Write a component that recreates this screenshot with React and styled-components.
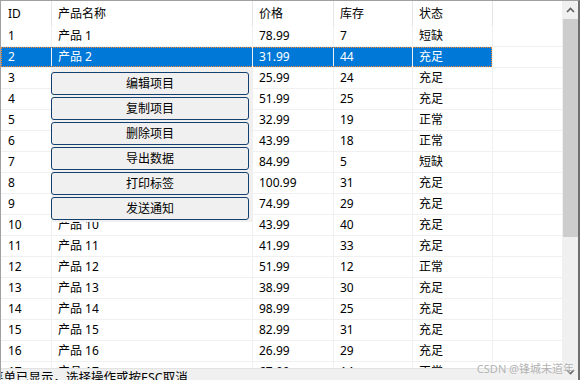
import React from 'react'
import styled, { createGlobalStyle, css } from 'styled-components'

const GlobalStyle = createGlobalStyle`
  html, body {
    margin: 0;
    padding: 0;
    background: #fff;
    overflow: hidden;
  }
  body {
    font-family: "Noto Sans", "Noto Sans CJK SC", sans-serif;
    font-size: 12px;
    color: #000;
  }
`

const cols = '51px 201px 81px 79px 80px 1fr'

const Window = styled.div`
  position: relative;
  width: 580px;
  height: 380px;
  box-sizing: border-box;
  border-top: 1px solid #a0a0a0;
  border-left: 1px solid #a0a0a0;
  border-right: 2px solid #6f6f6f;
  display: flex;
  overflow: hidden;
`

const Main = styled.div`
  flex: 1;
  display: flex;
  flex-direction: column;
  min-width: 0;
`

const ListArea = styled.div`
  position: relative;
  height: 367px;
  overflow: hidden;
  background: #fff;
`

const HeaderRow = styled.div`
  display: grid;
  grid-template-columns: ${cols};
  height: 25px;
`

const HeaderCell = styled.div`
  padding-left: ${p => (p.$first ? 7 : 6)}px;
  line-height: 25px;
  border-right: ${p => (p.$last ? 'none' : '1px solid #e5e5e5')};
  white-space: nowrap;
`

const Row = styled.div`
  position: relative;
  display: grid;
  grid-template-columns: ${cols};
  height: 21px;
  ${p => p.$selected && css`
    &::after {
      content: '';
      position: absolute;
      left: 0;
      top: 0;
      width: 491px;
      height: 20px;
      box-sizing: border-box;
      border: 1px dotted #ff8728;
      pointer-events: none;
    }
  `}
`

const Cell = styled.div`
  padding-left: ${p => (p.$first ? 7 : 6)}px;
  line-height: 20px;
  border-bottom: 1px solid #f0f0f0;
  border-right: ${p => (p.$last ? 'none' : '1px solid #f0f0f0')};
  background: ${p => (p.$selected ? '#0078d7' : '#fff')};
  color: ${p => (p.$selected ? '#fff' : '#000')};
  white-space: nowrap;
  overflow: hidden;
`

const Menu = styled.div`
  position: absolute;
  left: 50px;
  top: 67px;
  width: 200px;
  padding: 4px 2px 2px 0;
  background: #f0f0f0;
  display: flex;
  flex-direction: column;
  gap: 2px;
`

const MenuButton = styled.button`
  width: 198px;
  height: 23px;
  margin: 0;
  padding: 0;
  box-sizing: border-box;
  border: 1px solid #13406e;
  border-radius: 3px;
  background: #f0f0f0;
  font-family: inherit;
  font-size: 12px;
  color: #000;
  line-height: 21px;
  text-align: center;
`

const StatusBar = styled.div`
  flex: 1;
  background: #f0f0f0;
  border-top: 1px solid #e2e2e2;
  overflow: hidden;
`

const StatusText = styled.div`
  margin-left: -10px;
  padding-top: 1px;
  font-size: 12.5px;
  line-height: 16px;
  white-space: nowrap;
`

const Scrollbar = styled.div`
  width: 16px;
  background: #f0f0f0;
  display: flex;
  flex-direction: column;
`

const ArrowButton = styled.div`
  height: 17px;
  display: flex;
  align-items: center;
  justify-content: center;
`

const Thumb = styled.div`
  height: 218px;
  margin: 1px 0 0 1px;
  background: #cdcdcd;
`

const Track = styled.div`
  flex: 1;
`

const Watermark = styled.div`
  position: absolute;
  right: 4px;
  bottom: 5px;
  font-size: 11px;
  line-height: 13px;
  color: rgba(150, 150, 150, 0.75);
  text-shadow: 0 0 1px #fff;
  white-space: nowrap;
  pointer-events: none;
`

const Chevron = ({ down }) => (
  <svg width="9" height="6" viewBox="0 0 9 6">
    <path
      d={down ? 'M1 1 L4.5 4.5 L8 1' : 'M1 5 L4.5 1.5 L8 5'}
      fill="none"
      stroke="#606060"
      strokeWidth="1.6"
    />
  </svg>
)

const headers = ['ID', '产品名称', '价格', '库存', '状态', '']

const rows = [
  ['1', '产品 1', '78.99', '7', '短缺'],
  ['2', '产品 2', '31.99', '44', '充足'],
  ['3', '产品 3', '25.99', '24', '充足'],
  ['4', '产品 4', '51.99', '25', '充足'],
  ['5', '产品 5', '32.99', '19', '正常'],
  ['6', '产品 6', '43.99', '18', '正常'],
  ['7', '产品 7', '84.99', '5', '短缺'],
  ['8', '产品 8', '100.99', '31', '充足'],
  ['9', '产品 9', '74.99', '29', '充足'],
  ['10', '产品 10', '43.99', '40', '充足'],
  ['11', '产品 11', '41.99', '33', '充足'],
  ['12', '产品 12', '51.99', '12', '正常'],
  ['13', '产品 13', '38.99', '30', '充足'],
  ['14', '产品 14', '98.99', '25', '充足'],
  ['15', '产品 15', '82.99', '31', '充足'],
  ['16', '产品 16', '26.99', '29', '充足'],
  ['17', '产品 17', '67.99', '14', '正常'],
]

const menuItems = ['编辑项目', '复制项目', '删除项目', '导出数据', '打印标签', '发送通知']

const App = () => {
  return (
    <>
      <GlobalStyle />
      <Window>
        <Main>
          <ListArea>
            <HeaderRow>
              {headers.map((h, i) => (
                <HeaderCell key={i} $first={i === 0} $last={i === headers.length - 1}>{h}</HeaderCell>
              ))}
            </HeaderRow>
            {rows.map((r, idx) => {
              const selected = idx === 1
              return (
                <Row key={r[0]} $selected={selected}>
                  {r.map((v, i) => (
                    <Cell key={i} $first={i === 0} $selected={selected}>{v}</Cell>
                  ))}
                  <Cell $last />
                </Row>
              )
            })}
            <Menu>
              {menuItems.map(m => (
                <MenuButton key={m}>{m}</MenuButton>
              ))}
            </Menu>
          </ListArea>
          <StatusBar>
            <StatusText>菜单已显示，选择操作或按ESC取消</StatusText>
          </StatusBar>
        </Main>
        <Scrollbar>
          <ArrowButton><Chevron /></ArrowButton>
          <Thumb />
          <Track />
          <ArrowButton><Chevron down /></ArrowButton>
        </Scrollbar>
        <Watermark>CSDN @锋城未道年</Watermark>
      </Window>
    </>
  )
}

export default App
